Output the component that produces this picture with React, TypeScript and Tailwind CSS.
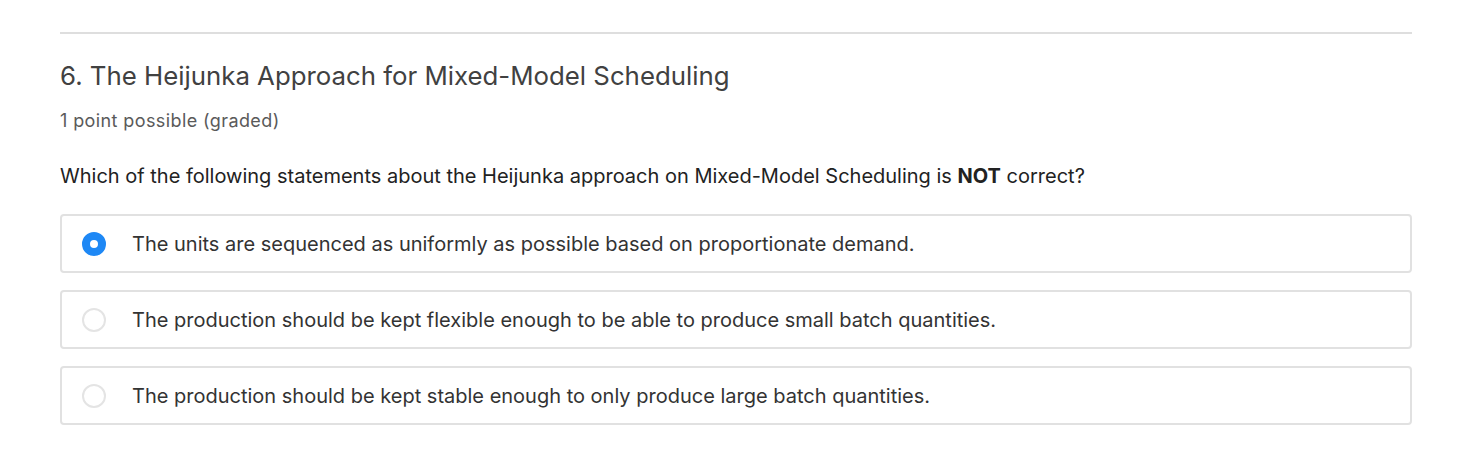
import React, { useState } from "react";

const options = [
  "The units are sequenced as uniformly as possible based on proportionate demand.",
  "The production should be kept flexible enough to be able to produce small batch quantities.",
  "The production should be kept stable enough to only produce large batch quantities.",
];

const App = () => {
  const [selected, setSelected] = useState(0);

  return (
    <div className="min-h-screen bg-white font-['Inter','Liberation_Sans',sans-serif] px-[60px] pt-[32px]">
      <div className="w-[1352px]">
        <div className="border-t-2 border-[#dedede]" />

        <h3 className="mt-[26px] text-[25.8px] leading-[32px] text-[#414141] font-normal">
          6. The Heijunka Approach for Mixed-Model Scheduling
        </h3>
        <p className="mt-[16px] text-[18px] leading-[26px] tracking-[0.4px] text-[#5a5a5a]">1 point possible (graded)</p>

        <p className="mt-[28px] text-[20px] leading-[28px] text-[#222]">
          Which of the following statements about the Heijunka approach on Mixed-Model Scheduling is{" "}
          <strong className="font-bold">NOT</strong> correct?
        </p>

        <div className="mt-[24px] flex flex-col gap-[17px]">
          {options.map((text, i) => (
            <label
              key={i}
              onClick={() => setSelected(i)}
              className="flex items-center h-[59px] border-2 border-[#e1e1e1] rounded-[4px] pl-[20px] cursor-pointer"
            >
              {selected === i ? (
                <span className="w-[24px] h-[24px] rounded-full border-[8px] border-[#1e88f5] bg-white shrink-0" />
              ) : (
                <span className="w-[24px] h-[24px] rounded-full border-2 border-[#e4e4e4] bg-white shrink-0" />
              )}
              <span className="ml-[26px] text-[20px] text-[#333]">{text}</span>
            </label>
          ))}
        </div>
      </div>
    </div>
  );
};

export default App;
